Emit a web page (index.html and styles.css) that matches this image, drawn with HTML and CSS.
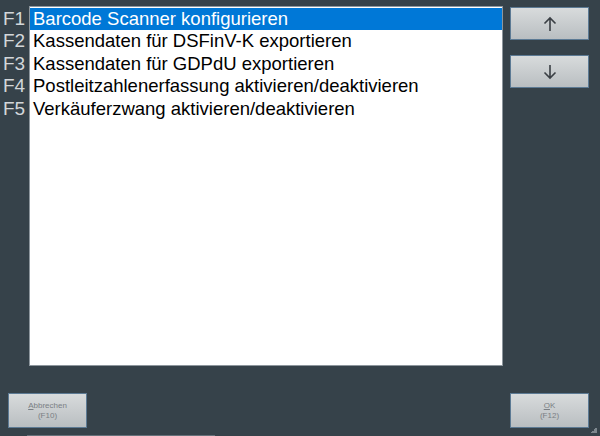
FILE: index.html
```html
<!DOCTYPE html>
<html lang="de">

<head>
  <meta charset="UTF-8">
  <meta name="viewport" content="width=device-width, initial-scale=1.0">
  <link rel="stylesheet" href="styles.css">
  <title>Funktionen</title>
</head>

<body>
  <div class="screen">
    <div class="main">
      <div class="keys">
        <div class="key">F1</div>
        <div class="key">F2</div>
        <div class="key">F3</div>
        <div class="key">F4</div>
        <div class="key">F5</div>
      </div>
      <div class="list">
        <div class="row selected">Barcode Scanner konfigurieren</div>
        <div class="row">Kassendaten für DSFinV-K exportieren</div>
        <div class="row">Kassendaten für GDPdU exportieren</div>
        <div class="row">Postleitzahlenerfassung aktivieren/deaktivieren</div>
        <div class="row">Verkäuferzwang aktivieren/deaktivieren</div>
      </div>
      <div class="side">
        <button class="btn arrow">
          <svg width="14" height="16" viewBox="0 0 14 16"><path d="M7 15V2M1.5 7.5L7 2l5.5 5.5" fill="none" stroke="#3a3f44" stroke-width="1.6"/></svg>
        </button>
        <button class="btn arrow">
          <svg width="14" height="16" viewBox="0 0 14 16"><path d="M7 1v13M1.5 8.5L7 14l5.5-5.5" fill="none" stroke="#3a3f44" stroke-width="1.6"/></svg>
        </button>
      </div>
    </div>
    <div class="footer">
      <button class="btn small"><span><u>A</u>bbrechen</span><span>(F10)</span></button>
      <button class="btn small"><span><u>O</u>K</span><span>(F12)</span></button>
    </div>
    <div class="strip"></div>
    <div class="grip"></div>
  </div>
</body>

</html>
```

FILE: styles.css
```css
body {
  margin: 0;
  background-color: #36424a;
  font-family: "Liberation Sans", Arial, sans-serif;
}

.screen {
  position: relative;
  width: 600px;
  height: 436px;
  overflow: hidden;
}

.main {
  display: flex;
  padding-top: 6px;
}

.keys {
  width: 29px;
  padding-top: 2px;
  box-sizing: border-box;
  padding-left: 3px;
}

.key {
  height: 22.4px;
  line-height: 22.4px;
  font-size: 19px;
  color: #d3d7da;
}

.list {
  width: 474px;
  height: 360px;
  box-sizing: border-box;
  border: 1px solid #8d969d;
  background-color: #fff;
  padding: 1px 0 0 0;
}

.row {
  height: 22.4px;
  line-height: 22.4px;
  font-size: 18.5px;
  color: #000;
  padding-left: 3px;
  white-space: nowrap;
}

.row.selected {
  background-color: #0078d7;
  color: #fff;
}

.side {
  display: flex;
  flex-direction: column;
  gap: 15px;
  padding-left: 7px;
  padding-top: 1px;
}

.btn {
  width: 79px;
  height: 33px;
  box-sizing: border-box;
  border: 1px solid #5c7a94;
  background: linear-gradient(#d8dbdc, #b9bec1);
  padding: 0;
  display: flex;
  flex-direction: column;
  align-items: center;
  justify-content: center;
}

.footer {
  display: flex;
  justify-content: space-between;
  padding: 27px 11px 0 8px;
}

.btn.small {
  height: 35px;
  font-size: 8px;
  color: #7a7f84;
  line-height: 10px;
}

.strip {
  position: absolute;
  left: 27px;
  bottom: 0;
  width: 188px;
  height: 1px;
  background-color: #66717a;
}

.grip {
  position: absolute;
  right: 3px;
  bottom: 3px;
  width: 6px;
  height: 6px;
  background: linear-gradient(135deg, transparent 50%, #7d878e 50%);
}
```
